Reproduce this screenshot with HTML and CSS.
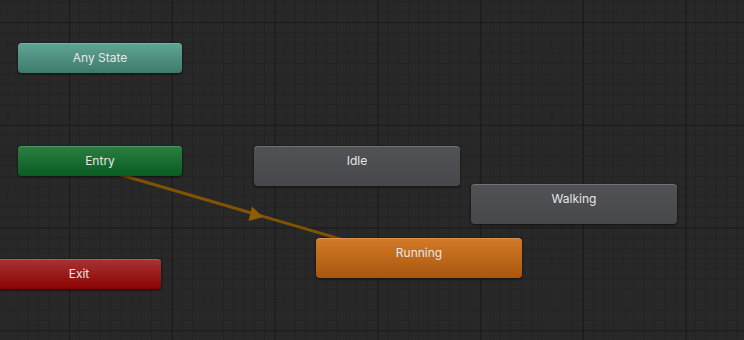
FILE: index.html
```html
<!DOCTYPE html>
<html lang="en">

<head>
    <meta charset="UTF-8">
    <meta name="viewport" content="width=device-width, initial-scale=1.0">
    <title>Animator</title>
    <link rel="stylesheet" href="styles.css">
</head>

<body>
    <!-- Graph Canvas -->
    <div class="graph">
        <!-- Transitions -->
        <svg class="links" width="744" height="340" viewBox="0 0 744 340">
            <line x1="100" y1="168.7" x2="419" y2="262" class="link-line" />
            <polygon points="263,217 252,206.5 248.5,221" class="link-arrow" />
        </svg>

        <!-- States -->
        <div class="node node-any">Any State</div>
        <div class="node node-entry">Entry</div>
        <div class="node node-exit">Exit</div>
        <div class="node state node-idle">Idle</div>
        <div class="node state node-walking">Walking</div>
        <div class="node state node-running">Running</div>
    </div>
</body>

</html>
```

FILE: styles.css
```css
/* Global Reset */
* {
    margin: 0;
    padding: 0;
    box-sizing: border-box;
}

body {
    background: #282828;
    overflow: hidden;
}

/* Graph Canvas */
.graph {
    position: relative;
    width: 744px;
    height: 340px;
    overflow: hidden;
    background-color: #282828;
    background-image:
        linear-gradient(to right, #1a1a1a 1px, transparent 1px),
        linear-gradient(to bottom, #1a1a1a 1px, transparent 1px),
        linear-gradient(to right, #232323 1px, transparent 1px),
        linear-gradient(to bottom, #232323 1px, transparent 1px);
    background-size: 102.8px 102.8px, 102.8px 102.8px, 10.28px 10.28px, 10.28px 10.28px;
    background-position: 69px 22px, 69px 22px, 69px 22px, 69px 22px;
}

/* Transitions */
.links {
    position: absolute;
    top: 0;
    left: 0;
}

.link-line {
    stroke: #7f5300;
    stroke-width: 3;
}

.link-arrow {
    fill: #8f5e00;
}

/* State Nodes */
.node {
    position: absolute;
    width: 164px;
    height: 30px;
    padding-top: 7px;
    border-radius: 4px;
    font-family: Inter, "Noto Sans", sans-serif;
    font-size: 12px;
    line-height: 16px;
    color: #e6e6e6;
    text-align: center;
    box-shadow: 0 1px 3px rgba(0, 0, 0, 0.6), inset 0 1px 0 rgba(255, 255, 255, 0.18);
}

.state {
    width: 206px;
    height: 40px;
}

.node-any {
    left: 18px;
    top: 43px;
    background: linear-gradient(to bottom, #5fa594, #3f7a6c);
}

.node-entry {
    left: 18px;
    top: 146px;
    background: linear-gradient(to bottom, #2a8040, #0a5c22);
}

.node-exit {
    left: -3px;
    top: 259px;
    background: linear-gradient(to bottom, #a83434, #8c0202);
}

.node-idle {
    left: 254px;
    top: 146px;
    background: linear-gradient(to bottom, #505255, #46484b);
}

.node-walking {
    left: 471px;
    top: 184px;
    background: linear-gradient(to bottom, #505255, #46484b);
}

.node-running {
    left: 316px;
    top: 238px;
    background: linear-gradient(to bottom, #d27b27, #a9560f);
}
```
